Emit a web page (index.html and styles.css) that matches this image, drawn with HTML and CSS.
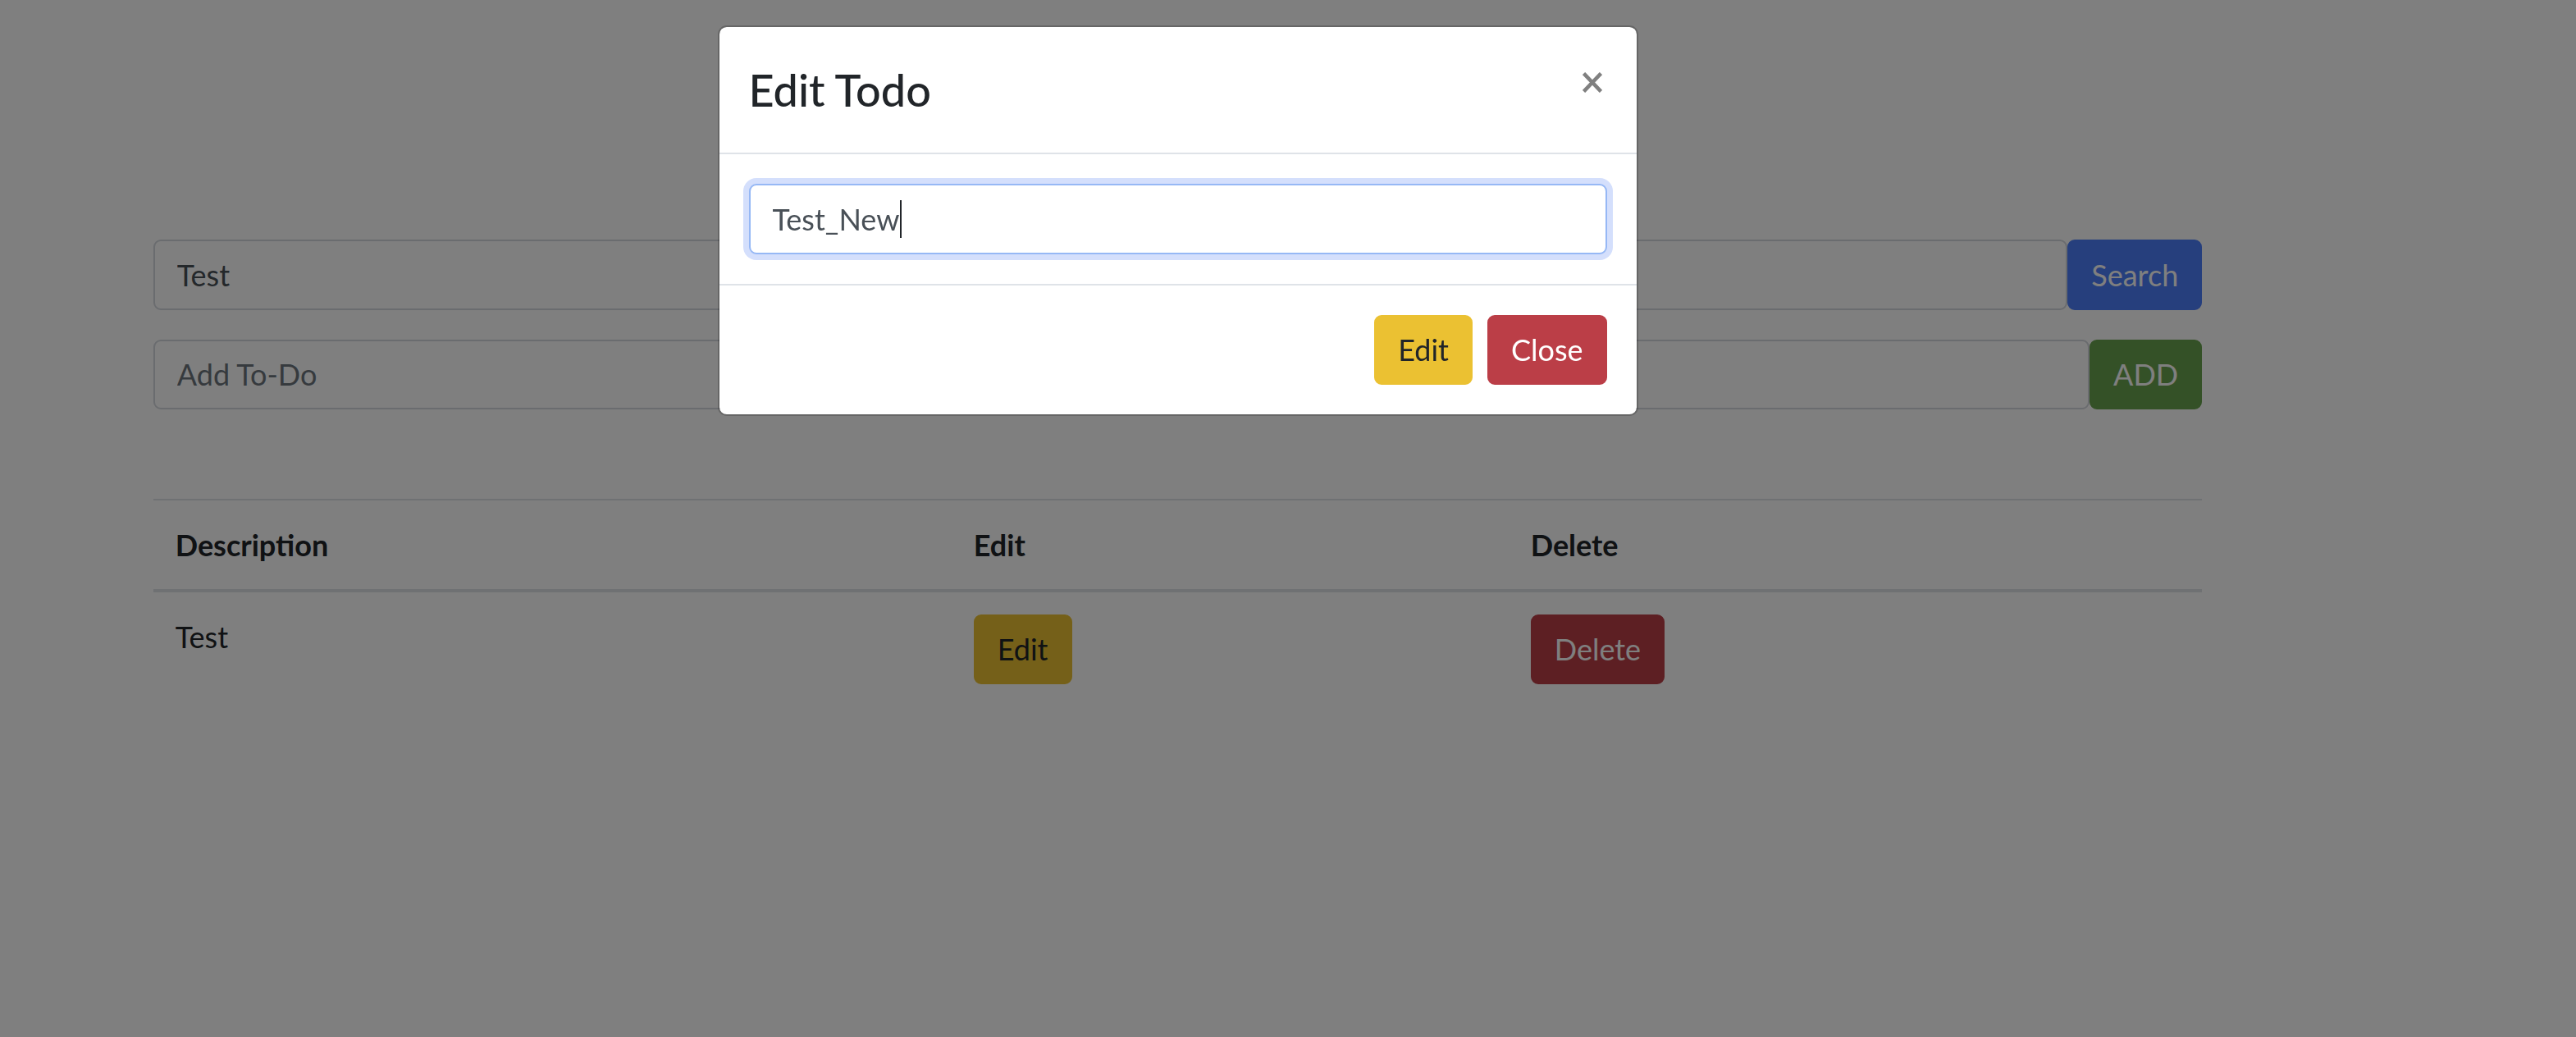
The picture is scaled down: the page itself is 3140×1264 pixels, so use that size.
FILE: index.html
```html
<!DOCTYPE html>
<html lang="en">
<head>
<meta charset="utf-8">
<title>Todo</title>
<link rel="stylesheet" href="styles.css">
</head>
<body>
<div class="page">
  <div class="container">
    <form class="form-row">
      <input class="form-control" type="text" value="Test">
      <button type="button" class="btn btn-primary">Search</button>
    </form>
    <form class="form-row">
      <input class="form-control" type="text" placeholder="Add To-Do">
      <button type="button" class="btn btn-success">ADD</button>
    </form>
    <table class="table">
      <thead>
        <tr>
          <th class="col-desc">Description</th>
          <th class="col-edit">Edit</th>
          <th class="col-del">Delete</th>
        </tr>
      </thead>
      <tbody>
        <tr>
          <td>Test</td>
          <td><button type="button" class="btn btn-warning">Edit</button></td>
          <td><button type="button" class="btn btn-danger">Delete</button></td>
        </tr>
      </tbody>
    </table>
  </div>
</div>

<div class="modal-backdrop"></div>

<div class="modal">
  <div class="modal-dialog">
    <div class="modal-content">
      <div class="modal-header">
        <h4 class="modal-title">Edit Todo</h4>
        <button type="button" class="close" aria-label="Close">
          <svg width="24" height="25" viewBox="0 0 24 25" aria-hidden="true"><path d="M1.5 1.5 L22.5 23.5 M22.5 1.5 L1.5 23.5" stroke="#808080" stroke-width="4.6" fill="none"/></svg>
        </button>
      </div>
      <div class="modal-body">
        <div class="form-control focused">Test_New<span class="caret"></span></div>
      </div>
      <div class="modal-footer">
        <button type="button" class="btn btn-warning">Edit</button>
        <button type="button" class="btn btn-danger">Close</button>
      </div>
    </div>
  </div>
</div>
</body>
</html>
```
FILE: styles.css
```css
html, body {
  margin: 0;
  padding: 0;
  background: #fff;
}

body {
  font-family: Lato, "Open Sans", sans-serif;
  font-size: 36px;
  line-height: 54px;
  color: #212529;
  width: 3140px;
  height: 1264px;
  overflow: hidden;
}

.page {
  width: 2871px;
  padding-top: 292px;
}

.container {
  max-width: 2565px;
  margin: 0 auto;
  padding: 0 33.75px;
  box-sizing: border-box;
}

.form-row {
  display: flex;
  margin: 0 0 36px 0;
}

.form-control {
  display: block;
  flex: 1;
  box-sizing: border-box;
  height: 85.5px;
  padding: 13.5px 27px;
  font-family: inherit;
  font-size: 36px;
  line-height: 54px;
  color: #495057;
  background: #fff;
  border: 2.25px solid #d5d8de;
  border-radius: 9px;
  outline: none;
  min-width: 0;
}

.form-control::placeholder {
  color: #6c757d;
}

.btn {
  display: inline-block;
  box-sizing: border-box;
  height: 85.5px;
  padding: 13.5px 27px;
  font-family: inherit;
  font-size: 36px;
  line-height: 54px;
  font-weight: 400;
  border: 2.25px solid transparent;
  border-radius: 9px;
  cursor: pointer;
}

.btn-primary { background: #4c7efa; border-color: #4c7efa; color: #fff; }
.btn-success { background: #68a24e; border-color: #68a24e; color: #fff; }
.btn-warning { background: #ebc132; border-color: #ebc132; color: #212529; }
.btn-danger  { background: #bb3e47; border-color: #bb3e47; color: #fff; }

.table {
  width: 100%;
  margin-top: 108.5px;
  border-collapse: collapse;
  color: #212529;
}

.table th,
.table td {
  padding: 27px;
  text-align: left;
  vertical-align: top;
  border-top: 2.25px solid #dee2e6;
}

.table thead th {
  vertical-align: bottom;
  font-weight: 700;
  border-bottom: 4.5px solid #dee2e6;
}

.col-desc { width: 973px; box-sizing: border-box; }
.col-edit { width: 679px; box-sizing: border-box; }
.col-del  { box-sizing: border-box; }

.modal-backdrop {
  position: fixed;
  top: 0;
  left: 0;
  right: 0;
  bottom: 0;
  background: #000;
  opacity: 0.5;
  z-index: 10;
}

.modal {
  position: fixed;
  top: 0;
  left: 0;
  width: 2871px;
  height: 100%;
  z-index: 20;
}

.modal-dialog {
  width: 1122px;
  margin: 31px auto 0;
}

.modal-content {
  background: #fff;
  border: 2.25px solid rgba(0, 0, 0, 0.2);
  border-radius: 10.8px;
  background-clip: padding-box;
}

.modal-header {
  display: flex;
  align-items: flex-start;
  justify-content: space-between;
  padding: 36px;
  border-bottom: 2.25px solid #dfe3e8;
}

.modal-title {
  margin: 0;
  font-size: 54px;
  line-height: 81px;
  font-weight: 500;
  color: #212529;
}

.close {
  margin: 19px 6px 0 auto;
  padding: 0;
  border: 0;
  background: transparent;
  line-height: 0;
  cursor: pointer;
}

.modal-body {
  padding: 36px;
}

.form-control.focused {
  flex: none;
  width: 100%;
  border-color: #96b8f5;
  box-shadow: 0 0 0 7px #d4dffc;
  white-space: nowrap;
}

.caret {
  display: inline-block;
  width: 2px;
  height: 46px;
  margin-left: 1px;
  vertical-align: -9px;
  background: #212529;
}

.modal-footer {
  display: flex;
  justify-content: flex-end;
  align-items: center;
  padding: 27px;
  border-top: 2.25px solid #dfe3e8;
}

.modal-footer .btn {
  margin: 9px;
}
```
